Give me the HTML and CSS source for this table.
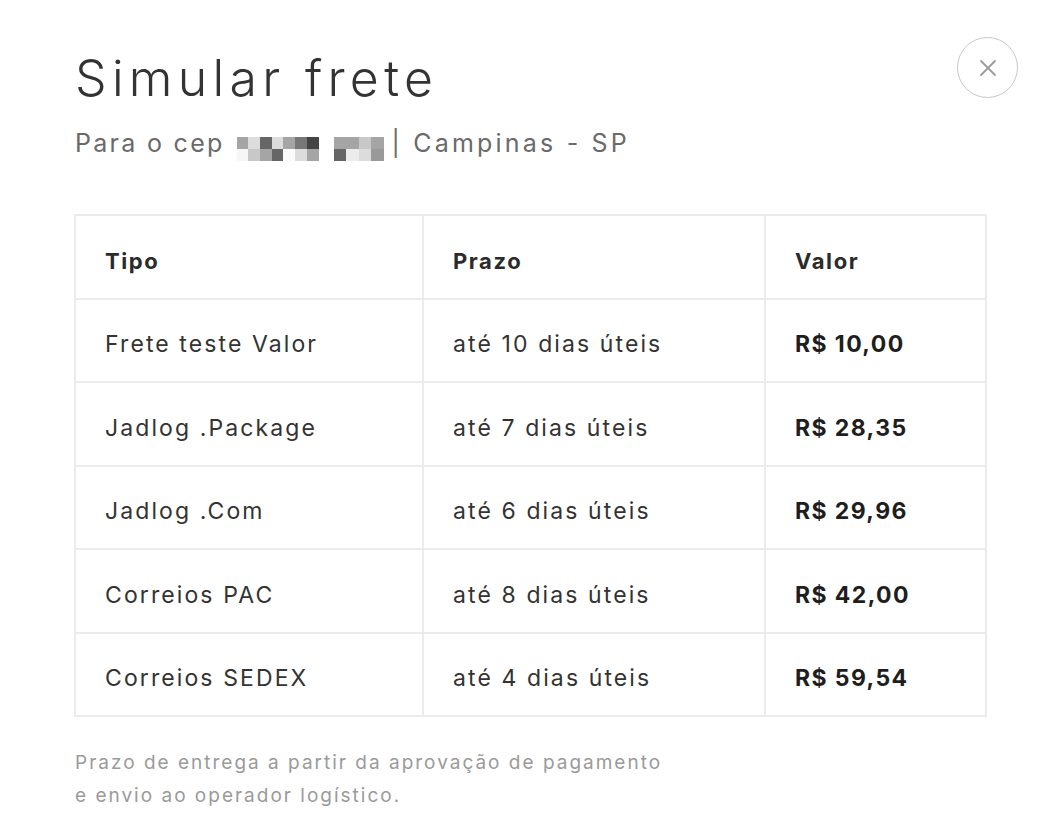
FILE: index.html
```html
<!DOCTYPE html>
<html lang="pt-BR">
<head>
<meta charset="utf-8">
<title>Simular frete</title>
<link rel="stylesheet" href="styles.css">
</head>
<body>
<div class="modal">
  <button class="close" aria-label="Fechar">
    <svg width="18" height="18" viewBox="0 0 18 18"><path d="M2 2L16 16M16 2L2 16" stroke="#9a9a9a" stroke-width="1.8" fill="none" stroke-linecap="round"/></svg>
  </button>
  <h1 class="title">Simular frete</h1>
  <p class="subtitle">
    <span class="lead">Para o cep</span>
    <span class="mosaic m7">
      <i class="s3"></i><i class="s6"></i><i class="s1"></i><i class="s6"></i><i class="s3"></i><i class="s2"></i><i class="s0"></i>
      <i class="s8"></i><i class="s5"></i><i class="s3"></i><i class="s1"></i><i class="s9"></i><i class="s6"></i><i class="s3"></i>
    </span>
    <span class="mosaic m4">
      <i class="s3"></i><i class="s3"></i><i class="s5"></i><i class="s3"></i>
      <i class="s1"></i><i class="s7"></i><i class="s6"></i><i class="s4"></i>
    </span><span class="city">| Campinas - SP</span>
  </p>

  <table class="freight">
    <thead>
      <tr><th class="c1">Tipo</th><th class="c2">Prazo</th><th class="c3">Valor</th></tr>
    </thead>
    <tbody>
      <tr><td>Frete teste Valor</td><td>até 10 dias úteis</td><td class="price">R$ 10,00</td></tr>
      <tr><td>Jadlog .Package</td><td>até 7 dias úteis</td><td class="price">R$ 28,35</td></tr>
      <tr><td>Jadlog .Com</td><td>até 6 dias úteis</td><td class="price">R$ 29,96</td></tr>
      <tr><td>Correios PAC</td><td>até 8 dias úteis</td><td class="price">R$ 42,00</td></tr>
      <tr><td>Correios SEDEX</td><td>até 4 dias úteis</td><td class="price">R$ 59,54</td></tr>
    </tbody>
  </table>

  <p class="note">Prazo de entrega a partir da aprovação de pagamento<br>e envio ao operador logístico.</p>
</div>
</body>
</html>
```

FILE: styles.css
```css
* { box-sizing: border-box; }
html, body { margin: 0; padding: 0; background: #fff; }
body {
  font-family: "Inter", "Noto Sans", sans-serif;
  color: #333;
  width: 1050px;
  height: 838px;
  overflow: hidden;
}
.modal {
  position: relative;
  padding: 48px 63px 0 74px;
}
.close {
  position: absolute;
  top: 37px;
  left: 957px;
  width: 61px;
  height: 61px;
  border-radius: 50%;
  border: 1px solid #c8c8c8;
  background: #fff;
  display: flex;
  align-items: center;
  justify-content: center;
  padding: 0;
}
.title {
  margin: 0 0 0 1px;
  font-weight: 300;
  font-size: 50px;
  line-height: 60px;
  letter-spacing: 5.3px;
  color: #333;
}
.subtitle {
  margin: 17px 0 0 1px;
  font-size: 25px;
  line-height: 36px;
  color: #6a6a6a;
  display: flex;
  align-items: flex-start;
}
.lead { margin-right: 12px; letter-spacing: 2.3px; }
.city { letter-spacing: 3.2px; }
.mosaic {
  display: grid;
  grid-auto-rows: 12px;
  margin-top: 12px;
}
.mosaic.m7 { grid-template-columns: repeat(7, 11.7px); margin-right: 15px; }
.mosaic.m4 { grid-template-columns: repeat(4, 12.5px); margin-right: 8px; }
.mosaic i { display: block; }
.s0 { background: #444; }
.s1 { background: #666; }
.s2 { background: #777; }
.s3 { background: #a5a5a5; }
.s4 { background: #999; }
.s5 { background: #c8c8c8; }
.s6 { background: #dcdcdc; }
.s7 { background: #ececec; }
.s8 { background: #f6f6f6; }
.s9 { background: #fafafa; }

.freight {
  margin-top: 53px;
  width: 913px;
  border-collapse: collapse;
  border: 2px solid #ebebeb;
  font-size: 23px;
  letter-spacing: 2.1px;
}
.freight th, .freight td {
  border: 2px solid #ebebeb;
  text-align: left;
  padding: 8px 0 0 29px;
  height: 83.5px;
  vertical-align: middle;
}
.freight th { font-size: 22px; font-weight: 700; color: #2b2b2b; letter-spacing: 1.6px; }
.freight .c1 { width: 348px; }
.freight .c2 { width: 342px; }
.freight .price { font-weight: 700; color: #1e1e1e; letter-spacing: 1.4px; }

.note {
  margin: 29px 0 0 1px;
  font-size: 19px;
  line-height: 33px;
  letter-spacing: 2px;
  color: #9a9a9a;
}
```
